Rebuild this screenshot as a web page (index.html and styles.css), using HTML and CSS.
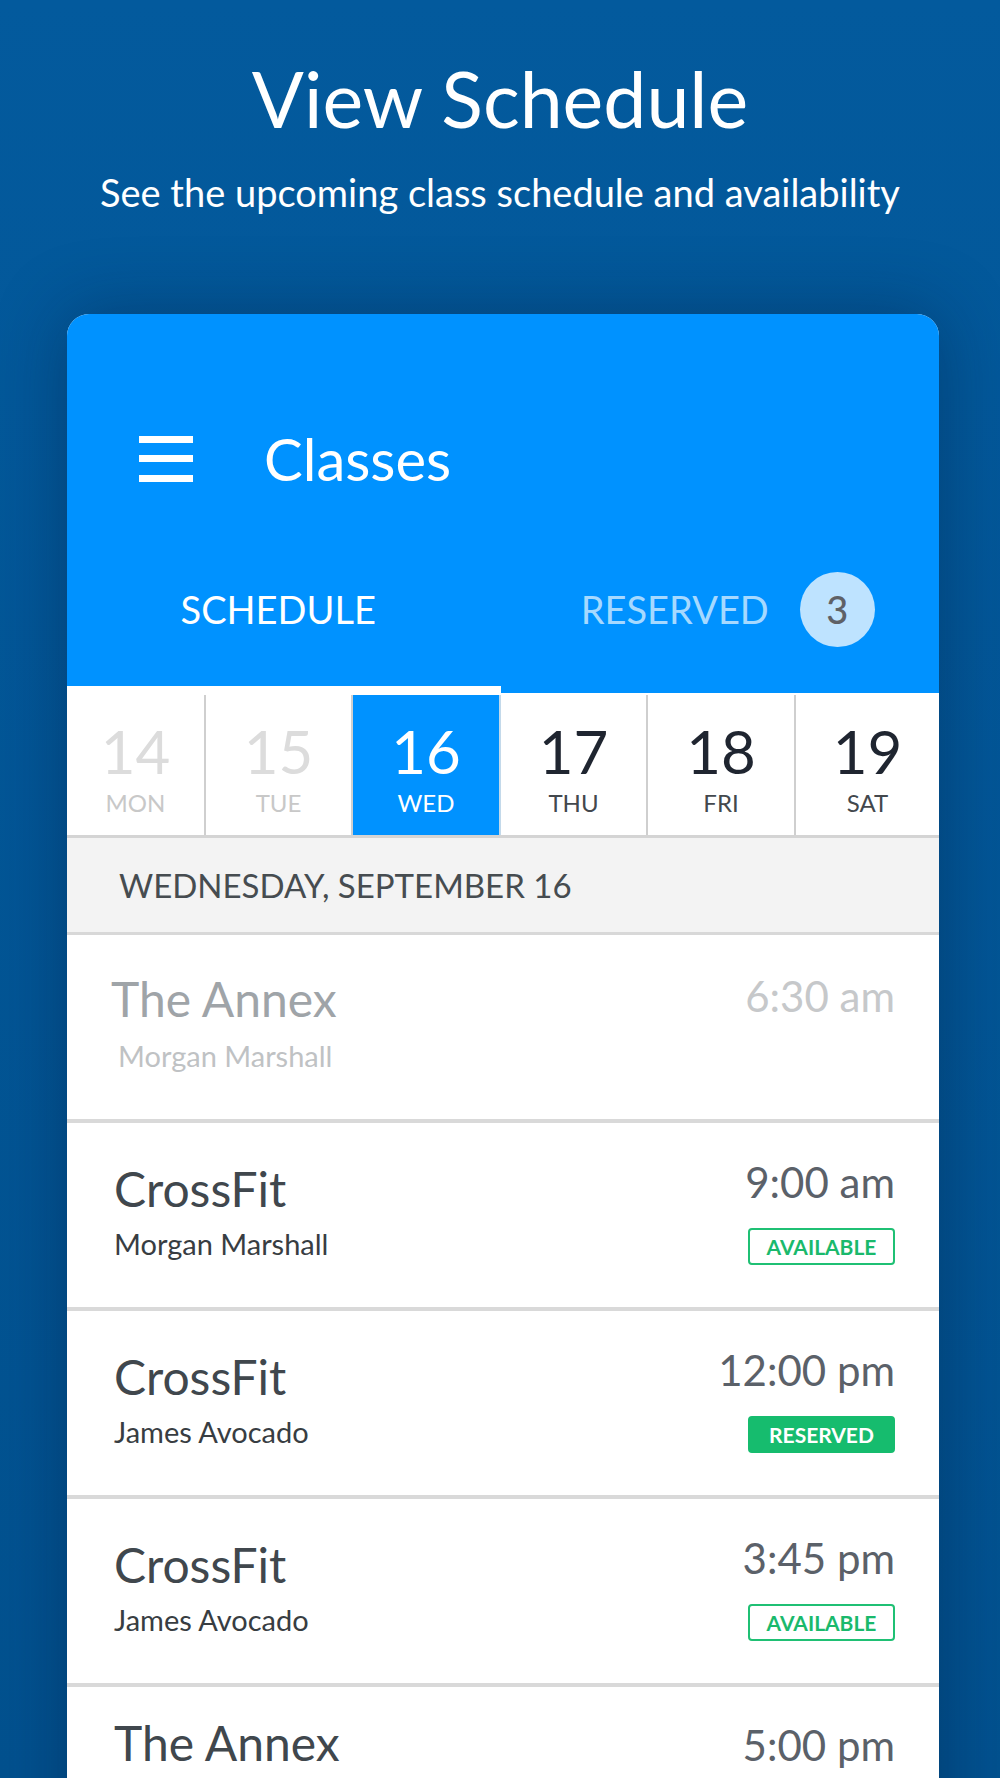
FILE: index.html
```html
<!DOCTYPE html>
<html lang="en">
<head>
  <meta charset="UTF-8" />
  <meta name="viewport" content="width=device-width, initial-scale=1.0"/>
  <title>View Schedule</title>
  <link rel="stylesheet" href="styles.css">
</head>
<body>
  <div class="page">
    <header class="intro">
      <h1>View Schedule</h1>
      <p>See the upcoming class schedule and availability</p>
    </header>

    <div class="phone">
      <div class="appbar">
        <div class="toolbar">
          <svg class="menu-icon" width="54" height="46" viewBox="0 0 54 46">
            <rect x="0" y="0" width="54" height="7" fill="#fff"/>
            <rect x="0" y="19" width="54" height="7" fill="#fff"/>
            <rect x="0" y="39" width="54" height="7" fill="#fff"/>
          </svg>
          <span class="toolbar-title">Classes</span>
        </div>
        <div class="tabs">
          <div class="tab tab-schedule active">SCHEDULE</div>
          <div class="tab tab-reserved">RESERVED <span class="count">3</span></div>
        </div>
      </div>

      <div class="days">
        <div class="day past"><span class="num">14</span><span class="dow">MON</span></div>
        <div class="day past"><span class="num">15</span><span class="dow">TUE</span></div>
        <div class="day selected"><span class="num">16</span><span class="dow">WED</span></div>
        <div class="day"><span class="num">17</span><span class="dow">THU</span></div>
        <div class="day"><span class="num">18</span><span class="dow">FRI</span></div>
        <div class="day"><span class="num">19</span><span class="dow">SAT</span></div>
      </div>

      <div class="date-heading">WEDNESDAY, SEPTEMBER 16</div>

      <ul class="classes">
        <li class="class-item done">
          <div class="info">
            <div class="name">The Annex</div>
            <div class="coach">Morgan Marshall</div>
          </div>
          <div class="meta">
            <div class="time">6:30 am</div>
          </div>
        </li>
        <li class="class-item">
          <div class="info">
            <div class="name">CrossFit</div>
            <div class="coach">Morgan Marshall</div>
          </div>
          <div class="meta">
            <div class="time">9:00 am</div>
            <span class="status">AVAILABLE</span>
          </div>
        </li>
        <li class="class-item">
          <div class="info">
            <div class="name">CrossFit</div>
            <div class="coach">James Avocado</div>
          </div>
          <div class="meta">
            <div class="time">12:00 pm</div>
            <span class="status reserved">RESERVED</span>
          </div>
        </li>
        <li class="class-item">
          <div class="info">
            <div class="name">CrossFit</div>
            <div class="coach">James Avocado</div>
          </div>
          <div class="meta">
            <div class="time">3:45 pm</div>
            <span class="status">AVAILABLE</span>
          </div>
        </li>
        <li class="class-item last">
          <div class="info">
            <div class="name">The Annex</div>
          </div>
          <div class="meta">
            <div class="time">5:00 pm</div>
          </div>
        </li>
      </ul>
    </div>
  </div>
</body>
</html>
```

FILE: styles.css
```css
body {
  margin: 0;
  font-family: 'Lato', 'Open Sans', sans-serif;
  background: linear-gradient(180deg, #035a9d, #02518f);
  color: #fff;
}
.page {
  height: 100vh;
  overflow: hidden;
}
.intro {
  padding-top: 59px;
  text-align: center;
}
.intro h1 {
  margin: 0;
  font-size: 77px;
  line-height: 78px;
  font-weight: 400;
}
.intro p {
  margin: 36px 0 0;
  font-size: 38px;
  line-height: 39px;
}
.phone {
  width: 872px;
  margin: 102px 0 0 67px;
  background: #fff;
  border-radius: 22px 22px 0 0;
  overflow: hidden;
  box-shadow: 0 0 70px rgba(0, 20, 50, 0.35);
}

/* app bar */
.appbar {
  background: #0092ff;
  padding-top: 100px;
}
.toolbar {
  height: 90px;
  display: flex;
  align-items: center;
  padding-left: 72px;
}
.toolbar-title {
  margin-left: 71px;
  font-size: 58px;
  line-height: 90px;
}
.tabs {
  display: flex;
}
.tab {
  flex: 1;
  height: 189px;
  box-sizing: border-box;
  padding-top: 68px;
  border-bottom: 7px solid transparent;
  display: flex;
  justify-content: center;
  align-items: flex-start;
  font-size: 38px;
  line-height: 75px;
}
.tab.active {
  border-bottom-color: #fff;
}
.tab-schedule {
  padding-right: 11px;
}
.tab-reserved {
  padding-left: 16px;
  color: #a6d9ff;
}
.count {
  width: 75px;
  height: 75px;
  margin-left: 31px;
  border-radius: 50%;
  background: #bee3ff;
  color: #5f6166;
  font-weight: 500;
  text-align: center;
}

/* day strip */
.days {
  display: grid;
  grid-template-columns: 139px 147px 148px 147px 148px 1fr;
  padding-top: 2px;
  border-bottom: 3px solid #d4d4d4;
}
.day {
  height: 140px;
  box-sizing: border-box;
  padding-top: 26px;
  border-right: 2px solid #cfcfcf;
  display: flex;
  flex-direction: column;
  align-items: center;
  color: #1f2530;
}
.day:last-child {
  border-right: none;
}
.day .num {
  font-size: 60px;
  line-height: 60px;
}
.day .dow {
  margin-top: 10px;
  font-size: 24px;
  line-height: 24px;
  color: #43484d;
}
.day.past .num {
  color: #dcdcdc;
}
.day.past .dow {
  color: #c8c8c8;
}
.day.selected {
  background: #0092ff;
  border-right-color: #c3d9ea;
}
.day.selected .num,
.day.selected .dow {
  color: #fff;
}

.date-heading {
  height: 94px;
  line-height: 94px;
  padding-left: 52px;
  background: #f3f3f3;
  border-bottom: 3px solid #d8d8d8;
  color: #464c50;
  font-size: 33px;
}

/* class list */
.classes {
  list-style: none;
  margin: 0;
  padding: 0;
}
.class-item {
  height: 188px;
  box-sizing: border-box;
  padding: 38px 44px 0 47px;
  border-bottom: 4px solid #d9d9d9;
  display: flex;
  justify-content: space-between;
}
.class-item .name {
  font-size: 48px;
  line-height: 56px;
  color: #40474d;
}
.class-item .coach {
  margin-top: 10px;
  font-size: 29px;
  line-height: 34px;
  color: #383d42;
}
.meta {
  display: flex;
  flex-direction: column;
  align-items: flex-end;
}
.time {
  margin-top: -4px;
  font-size: 42px;
  line-height: 50px;
  color: #5b6169;
}
.status {
  margin-top: 21px;
  width: 147px;
  height: 37px;
  box-sizing: border-box;
  border: 2px solid #1fc074;
  border-radius: 4px;
  color: #1ab96c;
  font-size: 21px;
  font-weight: 700;
  line-height: 33px;
  text-align: center;
}
.status.reserved {
  background: #16bc6e;
  border-color: #16bc6e;
  color: #fff;
}
.class-item.done .name {
  margin-top: -2px;
  margin-left: -3px;
  color: #9fa4a8;
}
.class-item.done .coach {
  margin-top: 12px;
  padding-left: 4px;
  color: #bfc2c4;
}
.class-item.done .time {
  margin-top: -2px;
  color: #c6c8ca;
}
.class-item.last .name {
  margin-top: -10px;
}
.class-item.last .time {
  margin-top: -5px;
}
```
